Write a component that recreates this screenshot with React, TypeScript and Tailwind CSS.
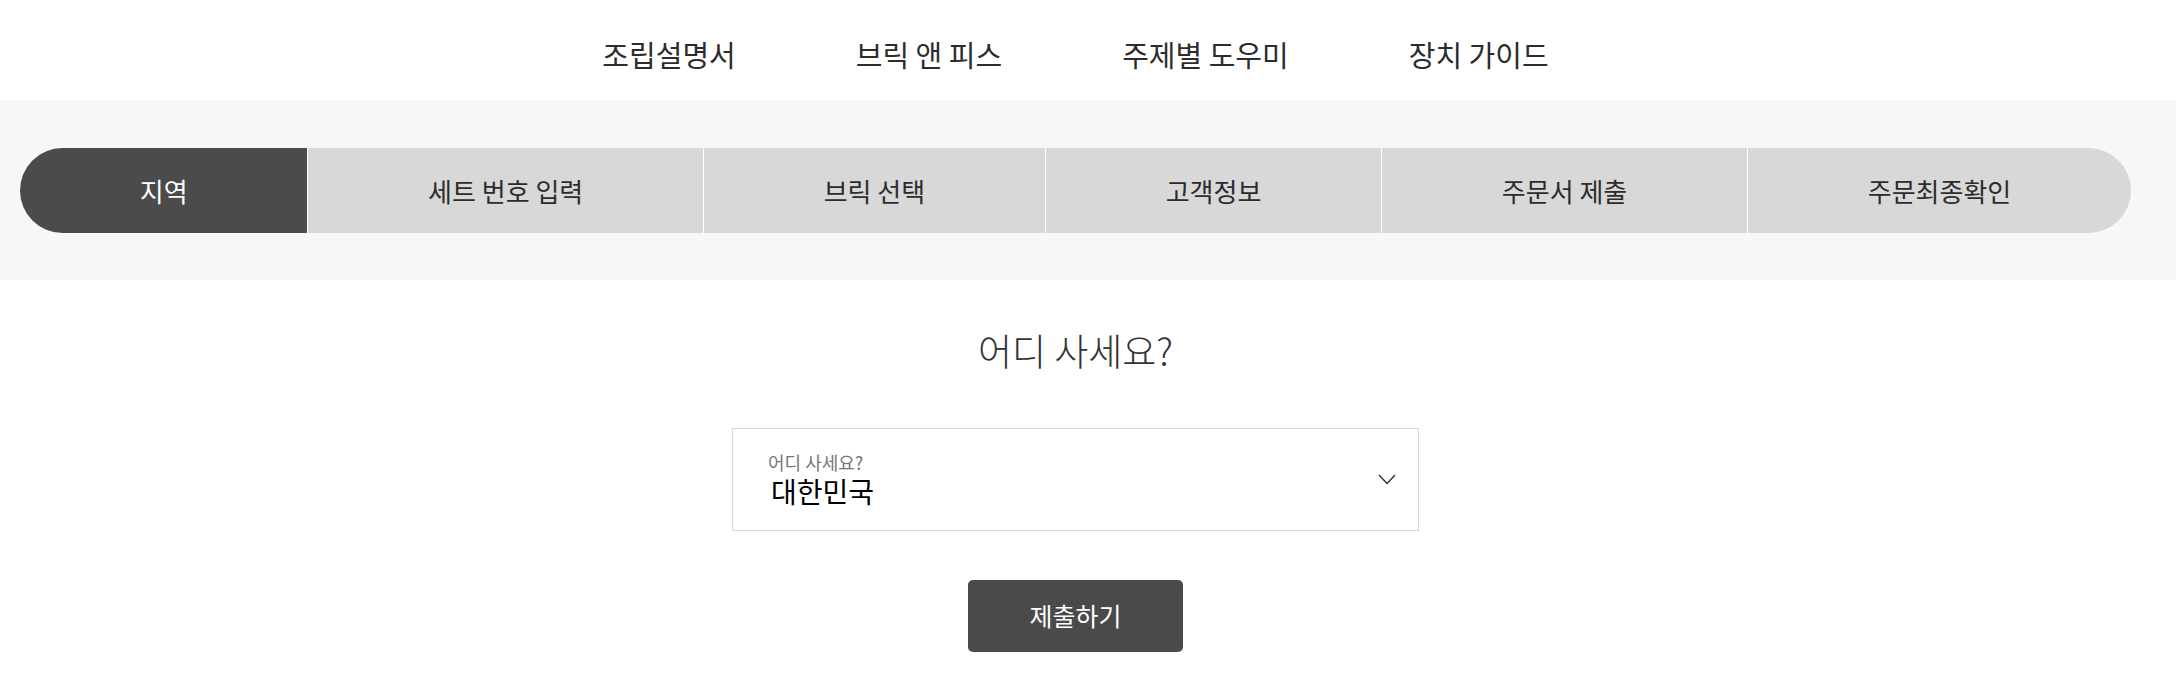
import React from "react";

const FONT = { fontFamily: '"Noto Sans CJK KR", "Noto Sans", sans-serif' };

const steps = ["지역", "세트 번호 입력", "브릭 선택", "고객정보", "주문서 제출", "주문최종확인"];
const navItems = ["조립설명서", "브릭 앤 피스", "주제별 도우미", "장치 가이드"];

export default function App() {
  return (
    <div className="w-[2176px] h-[682px] bg-white overflow-hidden" style={FONT}>
      <header className="h-[100px] flex items-center justify-center pr-[25px] pt-[8px]">
        <nav className="flex items-center gap-[120px]">
          {navItems.map((t) => (
            <span key={t} className="text-[29px] leading-[38px] text-[#2c2c2c]">
              {t}
            </span>
          ))}
        </nav>
      </header>

      <section className="h-[180px] bg-[#f7f7f7] flex items-center pl-[20px] pr-[45px]">
        <div className="flex w-full h-[85px] rounded-full overflow-hidden">
          {steps.map((s, i) => (
            <div
              key={s}
              className={
                i === 0
                  ? "flex-auto flex items-center justify-center bg-[#4b4b4b] text-white text-[26px]"
                  : "flex-auto flex items-center justify-center bg-[#d8d8d8] text-[#2c2c2c] text-[26px] border-l border-white"
              }
            >
              {s}
            </div>
          ))}
        </div>
      </section>

      <main className="flex flex-col items-center pr-[25px]">
        <h1 className="mt-[48px] text-[37px] leading-[44px] font-light text-[#333333]">어디 사세요?</h1>

        <div className="mt-[56px] w-[687px] h-[103px] border border-[#d8d8d8] flex items-center justify-between pl-[35px] pr-[22px]">
          <div className="flex flex-col">
            <span className="text-[18px] leading-[22px] text-[#777777]">어디 사세요?</span>
            <span className="ml-[3px] text-[28px] leading-[36px] text-black">대한민국</span>
          </div>
          <svg width="18" height="11" viewBox="0 0 18 11" fill="none">
            <polyline points="1,1 9,9.5 17,1" stroke="#333333" strokeWidth="1.4" />
          </svg>
        </div>

        <button className="mt-[49px] w-[215px] h-[72px] rounded-[5px] bg-[#4a4a4a] text-white text-[25px]">
          제출하기
        </button>
      </main>
    </div>
  );
}
